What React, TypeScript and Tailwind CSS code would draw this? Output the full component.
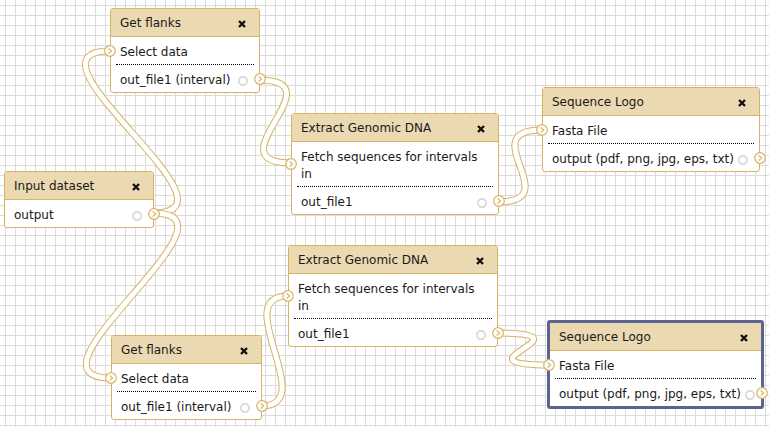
import React from "react";

// Couleurs du canevas de workflow
const GOLD = "#d8b365";

type Wire = { x1: number; y1: number; x2: number; y2: number; s: number };

// Connexions entre sorties et entrées (courbes de Bézier)
const wires: Wire[] = [
  { x1: 153, y1: 213, x2: 110, y2: 51, s: 100 },
  { x1: 153, y1: 213, x2: 111, y2: 378, s: 100 },
  { x1: 259, y1: 80, x2: 291, y2: 163, s: 80 },
  { x1: 498, y1: 202, x2: 542, y2: 130, s: 70 },
  { x1: 261, y1: 406, x2: 288, y2: 296, s: 60 },
  { x1: 497, y1: 333, x2: 549, y2: 365, s: 100 },
];

function Terminal() {
  return (
    <svg width="12" height="12" viewBox="0 0 12 12">
      <circle cx="6" cy="6" r="5.3" fill="white" stroke={GOLD} strokeWidth="1.2" />
      <path d="M4.6 3.4 L7.6 6 L4.6 8.6" fill="none" stroke={GOLD} strokeWidth="1.2" />
    </svg>
  );
}

function MarkIcon() {
  return (
    <svg width="10" height="10" viewBox="0 0 10 10" className="shrink-0">
      <polygon
        points="3.3,1 6.7,1 9,3.3 9,6.7 6.7,9 3.3,9 1,6.7 1,3.3"
        fill="none"
        stroke="#dcdcdc"
        strokeWidth="1.8"
      />
    </svg>
  );
}

function CloseIcon() {
  return (
    <svg width="8" height="8" viewBox="0 0 8 8">
      <path d="M1 1 L7 7 M7 1 L1 7" stroke="#111" strokeWidth="2.4" />
    </svg>
  );
}

type NodeProps = {
  title: string;
  inputs: string[];
  outputs: string[];
  className: string;
  selected?: boolean;
};

function Node({ title, inputs, outputs, className, selected }: NodeProps) {
  return (
    <div
      className={`absolute rounded-[3px] bg-white ${
        selected ? "border-[3px] border-[#5b6390]" : "border border-[#d8b365]"
      } ${className}`}
    >
      {/* En-tête du noeud */}
      <div className="flex items-center justify-between border-b border-[#d8b365] bg-[#ebd9b2] pb-[4px] pl-[9px] pr-[13px] pt-[6px]">
        <span>{title}</span>
        <CloseIcon />
      </div>
      {inputs.map((label) => (
        <div key={label} className="relative mx-[5px] border-b border-dotted border-black pb-[3px] pl-[4px] pr-[10px] pt-[7px]">
          <div className="absolute -left-[12px] top-1/2 flex -translate-y-1/2">
            <Terminal />
          </div>
          {label}
        </div>
      ))}
      {outputs.map((label) => (
        <div key={label} className="relative mx-[5px] flex items-center gap-[4px] pb-[3px] pl-[4px] pr-[6px] pt-[7px]">
          <span className="whitespace-nowrap">{label}</span>
          <span className="ml-auto flex shrink-0">
            <MarkIcon />
          </span>
          <div className="absolute -right-[12px] top-1/2 flex -translate-y-1/2">
            <Terminal />
          </div>
        </div>
      ))}
    </div>
  );
}

export default function App() {
  return (
    <div className="relative h-[427px] w-[769px] overflow-hidden bg-white bg-[linear-gradient(to_right,#dcdcdc_1px,transparent_1px),linear-gradient(to_bottom,#dcdcdc_1px,transparent_1px)] bg-[size:10px_10px] bg-[position:5px_5px] font-['DejaVu_Sans',sans-serif] text-[12px] leading-[17px] text-[#1a1a1a]">
      {/* Connecteurs */}
      <svg className="absolute inset-0" width="769" height="427">
        {wires.map((w, i) => {
          const d = `M${w.x1} ${w.y1} C${w.x1 + w.s} ${w.y1} ${w.x2 - w.s} ${w.y2} ${w.x2} ${w.y2}`;
          return (
            <g key={i}>
              <path d={d} fill="none" stroke={GOLD} strokeWidth="7" strokeLinecap="round" />
              <path d={d} fill="none" stroke="white" strokeWidth="5" strokeLinecap="round" />
            </g>
          );
        })}
      </svg>

      <Node
        title="Get flanks"
        inputs={["Select data"]}
        outputs={["out_file1 (interval)"]}
        className="left-[110px] top-[8px] w-[150px]"
      />
      <Node
        title="Input dataset"
        inputs={[]}
        outputs={["output"]}
        className="left-[4px] top-[171px] w-[150px]"
      />
      <Node
        title="Extract Genomic DNA"
        inputs={["Fetch sequences for intervals in"]}
        outputs={["out_file1"]}
        className="left-[291px] top-[113px] w-[208px]"
      />
      <Node
        title="Sequence Logo"
        inputs={["Fasta File"]}
        outputs={["output (pdf, png, jpg, eps, txt)"]}
        className="left-[542px] top-[87px] w-[218px]"
      />
      <Node
        title="Extract Genomic DNA"
        inputs={["Fetch sequences for intervals in"]}
        outputs={["out_file1"]}
        className="left-[288px] top-[245px] w-[210px]"
      />
      <Node
        title="Get flanks"
        inputs={["Select data"]}
        outputs={["out_file1 (interval)"]}
        className="left-[111px] top-[335px] w-[151px]"
      />
      <Node
        title="Sequence Logo"
        inputs={["Fasta File"]}
        outputs={["output (pdf, png, jpg, eps, txt)"]}
        className="left-[547px] top-[320px] w-[217px]"
        selected
      />
    </div>
  );
}
